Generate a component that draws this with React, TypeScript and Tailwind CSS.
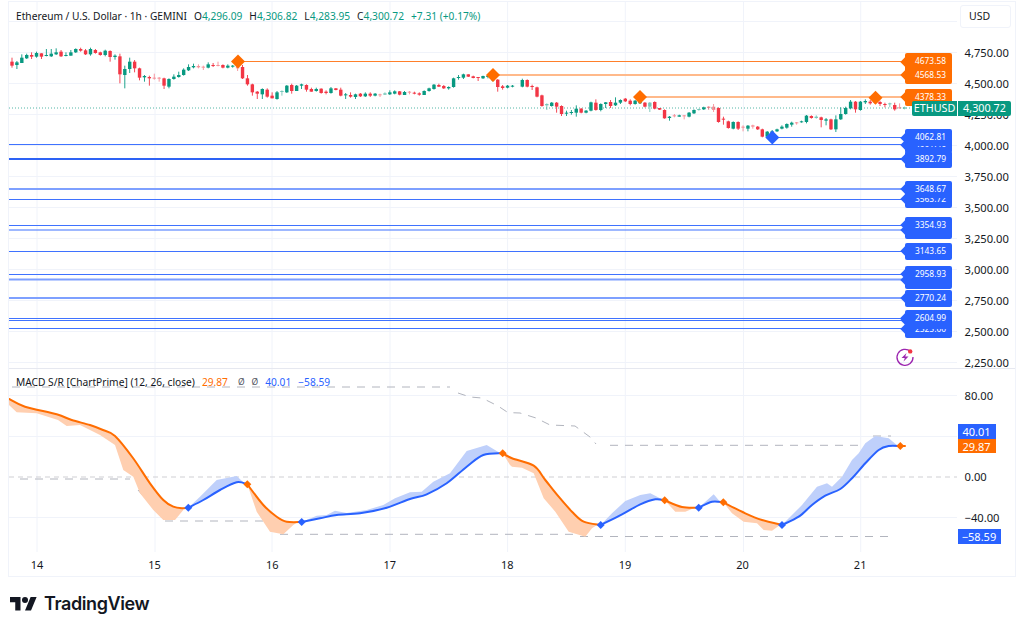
import React from 'react';

// candle rows: colour, body top, body bottom, wick top, wick bottom
// (values read off 3x crops, so y = top + v / 3). r/g solid, R/G faded.
const SEGMENTS: { x0: number; top: number; rows: string }[] = [
  {
    x0: 12,
    top: 35,
    rows: `r 80 92 68 98,g 82 90 78 102,g 68 84 58 84,g 60 70 56 72,r 60 65 52 72,g 54 65 50 68,r 55 65 55 72,g 60 62 42 64,g 56 64 42 66,g 52 58 40 60,r 50 64 45 66,g 60 62 52 64,g 52 62 45 62,g 42 52 40 54,r 42 47 38 50,r 46 58 42 60,g 42 58 38 62,r 45 54 42 56,r 52 60 50 62,g 47 60 44 64,r 48 66 46 80,g 62 66 58 74,r 64 118 56 145,g 102 120 92 160,g 80 102 68 114,r 80 100 75 112,r 100 128 98 136,g 123 127 120 140,r 126 130 122 152,R 128 130 116 134,R 128 130 126 140,r 130 152 128 162,g 132 155 130 160,g 125 132 118 134,g 120 126 110 128,g 104 120 100 122,g 96 106 88 108,g 93 97 86 100,R 93 97 88 100,R 95 97 92 105,g 88 98 82 100,r 90 92 84 96,R 90 92 80 94,r 90 98 88 100,g 92 98 88 100,g 92 94 90 98,R 90 100 85 108,r 96 130 90 132,r 130 148 120 152,r 148 172 146 182,r 170 176 168 192`,
  },
  {
    x0: 262.3,
    top: 55,
    rows: `g 102 118 100 132,r 104 125 100 128,r 122 130 112 130,g 112 132 108 134,G 108 110 106 122,g 92 112 90 114,r 90 108 86 116,g 92 108 90 108,g 88 92 86 102,r 90 104 88 110,r 102 110 98 110,g 102 108 98 110,r 101 114 100 116,r 110 114 106 118,g 100 114 96 116,r 100 105 99 106,r 104 122 98 124,g 118 120 114 132,r 120 125 112 128,g 118 126 116 132,r 116 124 114 126,g 116 124 112 126,r 116 122 112 126,g 116 122 114 124,R 118 120 116 126,G 115 119 112 120,g 112 118 106 120,g 109 116 106 118,r 109 119 108 121,g 111 120 108 120,R 110 113 108 118,r 113 116 110 118,r 115 119 112 122,g 108 120 106 120,g 100 108 98 110,g 89 102 87 104,r 90 95 86 96,r 93 100 90 102,g 96 100 94 104,g 70 96 68 98,g 66 68 60 74,g 58 68 56 72,r 58 65 58 66,r 64 69 62 70,r 66 68 66 78,g 63 70 62 72,g 62 66 60 70,G 74 76 70 80,r 74 96 72 110,r 94 99 90 104,g 92 98 90 100,g 92 95 90 97`,
  },
  {
    x0: 522.3,
    top: 80,
    rows: `g 0 20 -4 22,r 0 20 -2 22,r 18 20 14 30,r 22 50 20 52,r 46 78 44 80,G 72 76 70 90,g 68 78 66 80,r 68 80 66 98,r 78 102 76 108,g 98 100 92 108,g 96 98 90 104,g 86 98 76 110,r 86 98 84 100,g 92 98 90 100,g 67 92 65 94,r 68 90 58 92,g 72 90 70 94,g 67 72 66 84,r 66 78 60 84,g 68 76 52 78,g 60 68 58 72,r 56 64 54 66,r 62 72 58 76,g 62 72 60 74,g 64 70 60 72,r 68 80 66 82,G 68 80 66 96,r 66 86 64 88,r 84 89 84 90,r 90 115 88 116,g 110 114 108 122,R 106 108 102 112,g 106 110 104 110,R 106 108 105 118,g 98 110 96 112,g 90 100 88 102,G 87 90 86 92,g 82 88 80 90,R 80 84 78 90,R 80 90 72 96,r 84 126 82 128,r 116 118 110 134,r 124 144 122 146,g 126 146 124 148,r 126 146 124 150,R 140 142 136 154,g 137 146 135 154,R 136 140 134 146,r 140 148 138 150`,
  },
  {
    x0: 762.3,
    top: 50,
    rows: `r 238 260 236 262,g 245 260 243 262,g 244 256 240 258,g 238 244 236 246,g 230 236 226 238,g 222 233 220 236,g 218 224 215 230,R 217 220 216 224,g 214 216 212 218,g 197 216 195 220,r 198 204 196 206,G 200 204 196 206,r 202 210 200 232,g 208 212 204 226,r 208 238 206 240,g 208 238 196 246,g 192 208 172 210,g 174 192 170 194,g 155 175 150 178,r 155 178 153 188,g 155 180 153 182,g 153 157 148 162,r 155 160 150 164,r 150 158 148 162,r 156 162 152 168,r 162 165 158 172,G 160 163 158 172,r 165 178 158 182,R 172 174 160 176,G 172 176 170 178`,
  },
];

const candles = SEGMENTS.flatMap((seg) =>
  seg.rows.split(',').map((row, i) => {
    const [kind, a, b, c, d] = row.split(' ');
    const y = (v: string) => seg.top + Number(v) / 3;
    return { x: seg.x0 + i * 4.905, kind, bodyTop: y(a), bodyBottom: y(b), wickTop: y(c), wickBottom: y(d) };
  })
);

// s/r lines: y, start x, faded thick or thin
const LEVELS: { y: number; from: number; color: string; wide?: boolean }[] = [
  { y: 61.5, from: 238, color: '#ff7f2a' },
  { y: 75, from: 493, color: '#ffb98a', wide: true },
  { y: 97, from: 640, color: '#ffb98a', wide: true },
  { y: 137.5, from: 772, color: '#3f72ff' },
  { y: 144.5, from: 9, color: '#3f72ff' },
  { y: 159, from: 9, color: '#2d62f5', wide: true },
  { y: 189, from: 9, color: '#7ea0ff', wide: true },
  { y: 199.5, from: 9, color: '#3f72ff' },
  { y: 225.5, from: 9, color: '#3f72ff' },
  { y: 230, from: 9, color: '#3f72ff' },
  { y: 251.5, from: 9, color: '#3f72ff' },
  { y: 274.5, from: 9, color: '#3f72ff' },
  { y: 279.5, from: 9, color: '#7ea0ff', wide: true },
  { y: 298, from: 9, color: '#7ea0ff', wide: true },
  { y: 318.5, from: 9, color: '#3f72ff' },
  { y: 320.5, from: 9, color: '#3f72ff' },
  { y: 328.5, from: 9, color: '#3f72ff' },
];

// painted in this order, later ones sit on top
const TAGS: { y: number; text: string; color: string }[] = [
  { y: 144.5, text: '4001.46', color: 'bg-[#2962ff]' },
  { y: 329, text: '2525.00', color: 'bg-[#2962ff]' },
  { y: 320.4, text: '2593.12', color: 'bg-[#2962ff]' },
  { y: 318.4, text: '2604.99', color: 'bg-[#2962ff]' },
  { y: 298, text: '2770.24', color: 'bg-[#2962ff]' },
  { y: 280, text: '2913.40', color: 'bg-[#2962ff]' },
  { y: 274.4, text: '2958.93', color: 'bg-[#2962ff]' },
  { y: 251.4, text: '3143.65', color: 'bg-[#2962ff]' },
  { y: 230, text: '3314.08', color: 'bg-[#2962ff]' },
  { y: 225.4, text: '3354.93', color: 'bg-[#2962ff]' },
  { y: 199.3, text: '3563.72', color: 'bg-[#2962ff]' },
  { y: 189, text: '3648.67', color: 'bg-[#2962ff]' },
  { y: 159, text: '3892.79', color: 'bg-[#2962ff]' },
  { y: 137.5, text: '4062.81', color: 'bg-[#2962ff]' },
  { y: 97, text: '4378.33', color: 'bg-[#ff6d00]' },
  { y: 75, text: '4568.53', color: 'bg-[#ff6d00]' },
  { y: 61.5, text: '4673.58', color: 'bg-[#ff6d00]' },
];

const PRICES = ['4,750.00', '4,500.00', '4,250.00', '4,000.00', '3,750.00', '3,500.00', '3,250.00', '3,000.00', '2,750.00', '2,500.00', '2,250.00'];
const DAY_X = [37, 155, 272, 390, 507.6, 625.3, 743.5, 860.7];
const DAYS = ['14', '15', '16', '17', '18', '19', '20', '21'];

const ORANGE_LINES = [
  '9,399 25,406.7 56.7,414.3 71.7,420 90,425 103,430 115,436 133,458 150,483.3 163.3,500 173.3,506.7 183,508.3 188.3,507.7',
  '247.3,484.3 263.3,505 276.7,516.7 286.7,521.7 301.7,522',
  '502.7,453.3 512,458.3 533.7,465.7 545.3,480 558.7,496.7 572,511.7 583.7,521.7 600.7,525',
  '664.7,500.3 682,507 698.7,507.7',
  '723.3,502.3 745.3,513.3 762,520 782,525',
  '900.3,446 905,446',
];
const BLUE_LINES = [
  '188.3,507.7 203.3,500 220,490 236.7,482.3 247.3,484.3',
  '301.7,522 320,518.3 336.7,515 360,513.3 386.7,507.7 410,499 426.7,494.3 446.7,483.3 466.7,466.7 483.3,455 502.7,453.3',
  '600.7,525 622,514.3 640.3,504.3 655.3,499.3 664.7,500.3',
  '698.7,507.7 712,501.7 723.3,502.3',
  '782,525 798.7,516.7 812,505 825.3,495.7 840.3,489 852,478.3 865.3,463.3 878.7,450 888.7,446 900.3,446',
];
const ORANGE_FILLS = [
  '9,399 25,406.7 56.7,414.3 71.7,420 90,425 103,430 115,436 133,458 150,483.3 163.3,500 173.3,506.7 183,508.3 183.3,510 175,520 163.3,520 153.3,510 140,493.3 133.3,476.7 123.3,470 115,445 100,435 80,425 66.7,426 58,420 36.7,413.3 16.7,412.3 9,405',
  '247.3,484.3 263.3,505 276.7,516.7 286.7,521.7 298,522 293.3,525 283.3,534.3 270,531.7 256.7,511.7',
  '502.7,453.3 512,458.3 533.7,465.7 545.3,480 558.7,496.7 572,511.7 583.7,521.7 597,525 592,528.3 585.3,536.7 568.7,531.7 555.3,511.7 543.7,498.3 533.7,473.3 522,467.7 512,466.7 510,465',
  '664.7,500.3 682,507 695,507.7 685.3,511.7 675.3,511.7',
  '723.3,502.3 745.3,513.3 762,520 780,525 772,530.7 763.7,530 757,523.3 743.7,521.7 732,513.3',
];
const BLUE_FILLS = [
  '188.3,507.7 200,496.7 216.7,480 236.7,476 243.3,482.3 236.7,482.3 220,490 203.3,500',
  '301.7,522 316.7,515.7 326.7,515 335,510.7 346.7,513 366.7,510 383.3,505 395,498.3 410,492.3 421.7,491.7 433.3,481.7 450,473.3 466.7,451 486.7,445 500,453 483.3,455 466.7,466.7 446.7,483.3 426.7,494.3 410,499 386.7,507.7 360,513.3 336.7,515 320,518.3',
  '600.7,525 612,513.3 625.3,501 640.3,495 650.3,493.3 662,499.3 655.3,499.3 640.3,504.3 622,514.3',
  '698.7,507.7 713.7,494.3 720.3,502 712,501.7',
  '782,525 802,505 817,486.7 827,483.3 832,486.7 842,476.7 852,460 858.7,453.3 865.3,443.3 875.3,436 888.7,438.3 898,446 888.7,446 878.7,450 865.3,463.3 852,478.3 840.3,489 825.3,495.7 812,505 798.7,516.7',
];
const DASHED = [
  '12,387 450,387',
  '458,393 470,397 482,398 498,406 508,412.6 520,413 536,418 550,425 575,426 590,437 596,444',
  '610,445.3 862,445.3',
  '873,436 891,436',
  '20,479 130,479',
  '138,490 155,510 165,520',
  '165,521 266,521 272,533',
  '280,534.3 576,534.3',
  '580,536.5 890,536.5',
];
const MARKERS: [number, number, string][] = [
  [188.3, 507.7, '#2962ff'], [247.3, 484.3, '#ff6d00'], [301.7, 522, '#2962ff'], [502.7, 453.3, '#ff6d00'],
  [600.7, 525, '#2962ff'], [664.7, 500.3, '#ff6d00'], [698.7, 507.7, '#2962ff'], [723.3, 502.3, '#ff6d00'],
  [782, 525, '#2962ff'], [900.3, 446, '#ff6d00'],
];

// catmull-rom through the measured points, the line in the picture is a smooth curve
function smooth(points: string) {
  const pts = points.split(' ').map((p) => p.split(',').map(Number));
  let d = `M${pts[0][0]} ${pts[0][1]}`;
  for (let i = 0; i < pts.length - 1; i++) {
    const p0 = pts[Math.max(i - 1, 0)];
    const p1 = pts[i];
    const p2 = pts[i + 1];
    const p3 = pts[Math.min(i + 2, pts.length - 1)];
    d += ` C${p1[0] + (p2[0] - p0[0]) / 6} ${p1[1] + (p2[1] - p0[1]) / 6} ${p2[0] - (p3[0] - p1[0]) / 6} ${p2[1] - (p3[1] - p1[1]) / 6} ${p2[0]} ${p2[1]}`;
  }
  return d;
}

function Diamond({ x, y, r, color }: { x: number; y: number; r: number; color: string }) {
  return <polygon points={`${x - r},${y} ${x},${y - r} ${x + r},${y} ${x},${y + r}`} fill={color} />;
}

function GridX() {
  return (
    <>
      {DAY_X.map((x) => (
        <line key={x} x1={x} x2={x} y1={0} y2={552} stroke="#f0f3fa" />
      ))}
    </>
  );
}

function PriceChart() {
  return (
    <svg viewBox="9 2 948 366" className="block w-full h-full">
      <GridX />
      {[21, 52, 83, 114, 145, 176, 207, 238, 269, 300, 331, 362].map((y) => (
        <line key={y} x1={9} x2={957} y1={y + 0.5} y2={y + 0.5} stroke="#f0f3fa" />
      ))}
      <line x1={9} x2={912} y1={108} y2={108} stroke="#089981" strokeOpacity={0.7} strokeDasharray="1 2" />
      {LEVELS.map((l) => (
        <line key={l.y} x1={l.from} x2={902} y1={l.y} y2={l.y} stroke={l.color} strokeWidth={l.wide ? 1.8 : 1.1} />
      ))}
      {candles.map((c, i) => {
        const color = c.kind.toLowerCase() === 'r' ? '#f23645' : '#089981';
        const opacity = c.kind === 'R' || c.kind === 'G' ? 0.55 : 1;
        return (
          <g key={i} fill={color} opacity={opacity}>
            <rect x={c.x - 0.45} y={c.wickTop} width={0.9} height={c.wickBottom - c.wickTop} />
            <rect x={c.x - 1.7} y={c.bodyTop} width={3.4} height={Math.max(c.bodyBottom - c.bodyTop, 1)} />
          </g>
        );
      })}
      <Diamond x={238} y={61.5} r={7} color="#ff6d00" />
      <Diamond x={493} y={75} r={7} color="#ff6d00" />
      <Diamond x={640} y={97} r={7} color="#ff6d00" />
      <Diamond x={875.5} y={97.8} r={7} color="#ff6d00" />
      <Diamond x={772.3} y={137.5} r={7} color="#2962ff" />
    </svg>
  );
}

function MacdChart() {
  return (
    <svg viewBox="9 369 948 183" className="block w-full h-full">
      <GridX />
      {[395.5, 436.5, 517.5].map((y) => (
        <line key={y} x1={9} x2={957} y1={y} y2={y} stroke="#f0f3fa" />
      ))}
      <line x1={9} x2={957} y1={477} y2={477} stroke="#cfd0d4" strokeWidth={1.2} strokeDasharray="5 4" />
      {DASHED.map((p) => (
        <polyline key={p} points={p} fill="none" stroke="#b2b5be" strokeWidth={1} strokeDasharray="8 7" />
      ))}
      {ORANGE_FILLS.map((p) => (
        <polygon key={p} points={p} fill="#ffcfb0" />
      ))}
      {BLUE_FILLS.map((p) => (
        <polygon key={p} points={p} fill="#bfd0fb" />
      ))}
      {ORANGE_LINES.map((p) => (
        <path key={p} d={smooth(p)} fill="none" stroke="#ff6d00" strokeWidth={2} strokeLinecap="round" />
      ))}
      {BLUE_LINES.map((p) => (
        <path key={p} d={smooth(p)} fill="none" stroke="#2962ff" strokeWidth={2} strokeLinecap="round" />
      ))}
      {MARKERS.map(([x, y, color]) => (
        <Diamond key={x} x={x} y={y} r={4} color={color} />
      ))}
    </svg>
  );
}

function LevelTag({ y, text, color }: { y: number; text: string; color: string }) {
  return (
    <div
      className={`absolute left-[896px] w-[47px] h-[17px] rounded-[2px] ${color} flex items-center justify-end pr-[6px] text-[8.4px] leading-none text-white`}
      style={{ top: y - 2 - 8.5 }}
    >
      <span className="absolute left-[-3.5px] top-[4.5px] w-[8px] h-[8px] rotate-45 bg-inherit" />
      <span className="relative">{text}</span>
    </div>
  );
}

export default function App() {
  return (
    <div className="w-[1024px] h-[630px] bg-white overflow-hidden font-['Noto_Sans',sans-serif] text-[#131722]">
      <div className="ml-[8px] mt-[1px] w-[1008px] h-[576px] border border-[#f0f3fa] flex flex-col">
        {/* price pane */}
        <div className="relative flex h-[367px] border-b border-[#e6e8f0]">
          <div className="w-[948px] h-full shrink-0">
            <PriceChart />
          </div>
          <div className="flex-1 text-[11.2px]">
            <div className="ml-[3px] mt-[3px] w-[51px] h-[23px] rounded-[3px] border border-[#f0f3fa] flex items-center pl-[8px] text-[10.5px]">USD</div>
            <div className="mt-[9px] pl-[7.5px]">
              {PRICES.map((p) => (
                <div key={p} className="h-[31px] flex items-center leading-none whitespace-nowrap">{p}</div>
              ))}
            </div>
          </div>

          <div className="absolute left-[7px] top-[7px] flex gap-[7px] text-[10.2px] leading-[14px] whitespace-nowrap">
            <span>Ethereum / U.S. Dollar · 1h · GEMINI</span>
            <span>O<span className="text-[#089981]">4,296.09</span></span>
            <span>H<span className="text-[#089981]">4,306.82</span></span>
            <span>L<span className="text-[#089981]">4,283.95</span></span>
            <span>C<span className="text-[#089981]">4,300.72</span></span>
            <span className="text-[#089981]">+7.31 (+0.17%)</span>
          </div>

          {TAGS.map((t) => (
            <LevelTag key={t.text} {...t} />
          ))}

          <div className="absolute left-[903px] top-[98.7px] flex h-[15px] text-white text-[10.8px] leading-none">
            <div className="w-[45px] bg-[#089981] flex items-center justify-center rounded-l-[2px]">ETHUSD</div>
            <div className="w-[53px] ml-[1px] bg-[#089981] flex items-center justify-center rounded-r-[2px]">4,300.72</div>
          </div>

          <svg viewBox="0 0 20 20" className="absolute left-[886px] top-[345px] w-[20px] h-[20px]">
            <path d="M15.5 4.5 A8 8 0 1 0 18 10" fill="none" stroke="#9c27b0" strokeWidth="1.3" />
            <path d="M11.5 6 L6.5 11 H9.8 L8.5 14.5 L13.5 9.5 H10.2 Z" fill="#9c27b0" />
            <circle cx="15.2" cy="4.4" r="2.2" fill="#f23645" />
          </svg>
        </div>

        {/* macd pane */}
        <div className="relative flex h-[183px]">
          <div className="w-[948px] h-full shrink-0">
            <MacdChart />
          </div>
          <div className="flex-1 pt-[6.5px] pl-[7.5px] text-[11.2px]">
            {['80.00', '40.00', '0.00', '−40.00'].map((p) => (
              <div key={p} className="h-[40.6px] flex items-center leading-none">{p}</div>
            ))}
          </div>

          <div className="absolute left-[7px] top-[6px] flex items-center gap-[7px] text-[10.2px] leading-[14px] whitespace-nowrap">
            <span>MACD S/R [ChartPrime] (12, 26, close)</span>
            <span className="text-[#ff6d00]">29.87</span>
            <span className="ml-[3px] text-[#50535e] text-[8.5px]">Ø</span>
            <span className="text-[#50535e] text-[8.5px]">Ø</span>
            <span className="text-[#2962ff]">40.01</span>
            <span className="text-[#2962ff]">−58.59</span>
          </div>

          <div className="absolute left-[948.5px] top-[54.5px] w-[38px] text-white text-[11px] leading-none">
            <div className="h-[15.3px] bg-[#2962ff] flex items-center justify-center">40.01</div>
            <div className="h-[14.7px] bg-[#ff6d00] flex items-center justify-center">29.87</div>
          </div>
          <div className="absolute left-[948.5px] top-[159.5px] w-[43px] h-[15.3px] bg-[#2962ff] flex items-center justify-center text-white text-[11px] leading-none">−58.59</div>
        </div>

        {/* time axis */}
        <div className="flex h-[24px] items-center ml-[-30.8px] text-[11px] leading-none">
          {DAYS.map((d) => (
            <div key={d} className="w-[117.6px] shrink-0 text-center">{d}</div>
          ))}
        </div>
      </div>

      {/* footer */}
      <div className="mt-[18px] ml-[10px] flex items-center gap-[7px] text-[#131722]">
        <svg viewBox="0 4 36 18" className="w-[27px] h-[13.5px]" fill="currentColor">
          <path d="M14 22H7V11H0V4h14v18zM28 22h-8l7.5-18h8L28 22z" />
          <circle cx="20" cy="8" r="4" />
        </svg>
        <span className="font-['Inter',sans-serif] font-semibold text-[18px] leading-[18px] tracking-[-0.4px]">TradingView</span>
      </div>
    </div>
  );
}
